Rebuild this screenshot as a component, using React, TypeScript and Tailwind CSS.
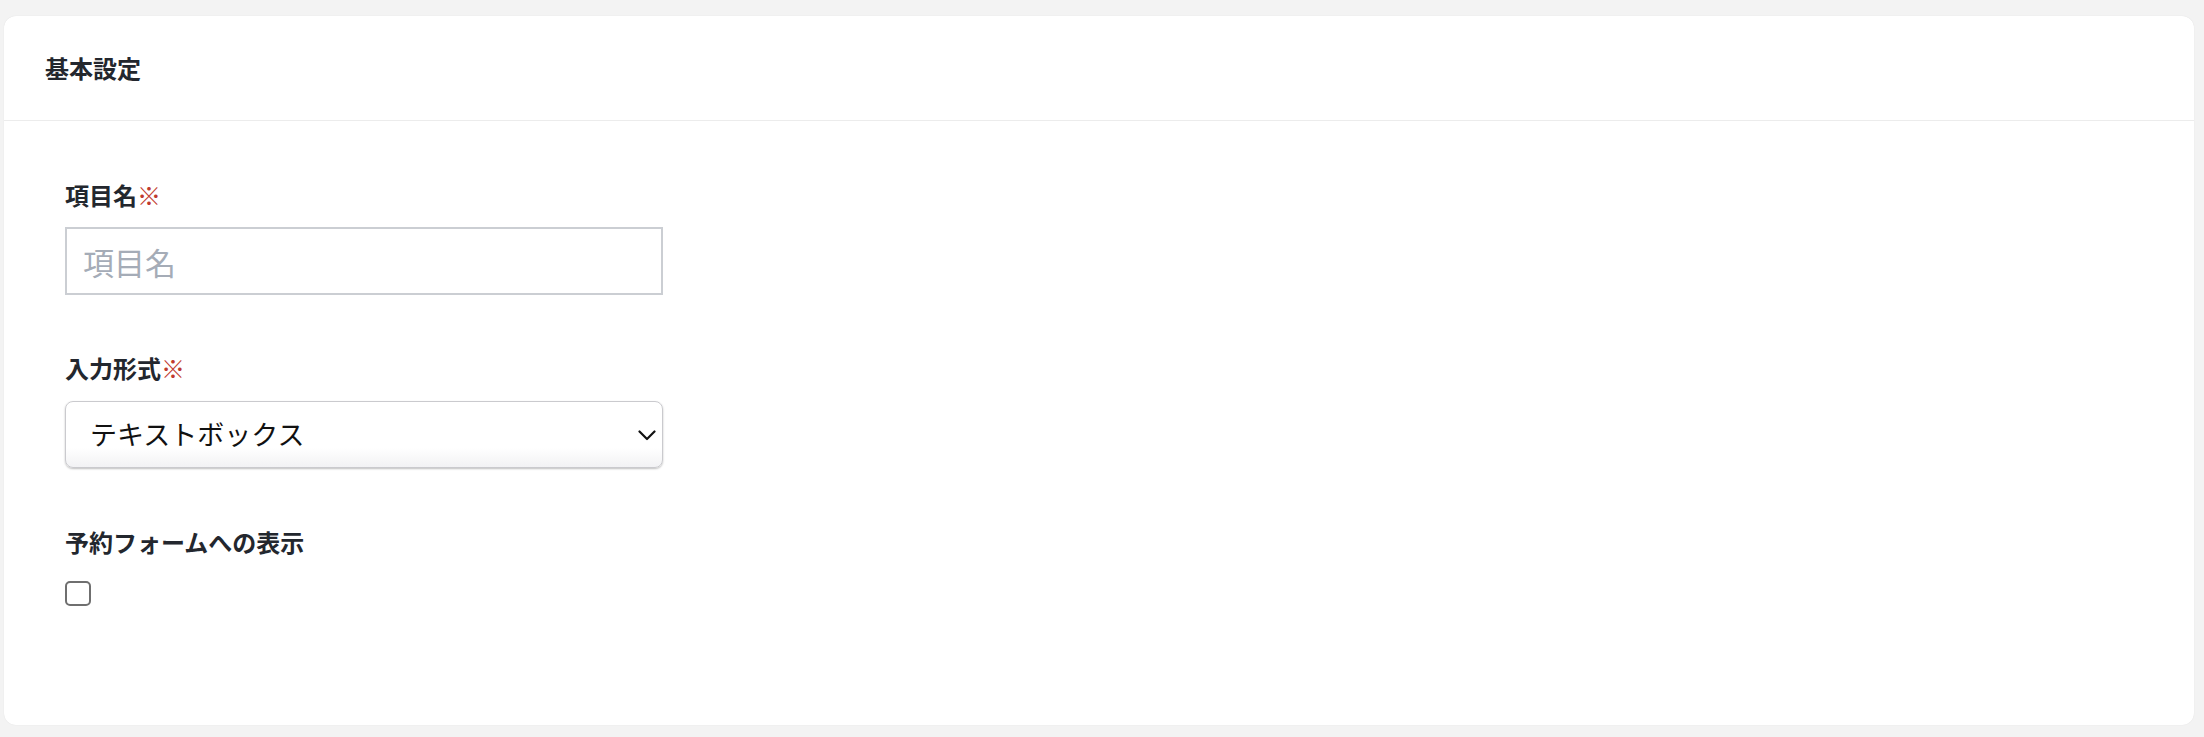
import { useState } from "react";

function Required() {
  return <span className="text-[#bf3a2e] font-normal">※</span>;
}

export default function App() {
  const [name, setName] = useState("");
  const [inputType, setInputType] = useState("text");
  const [showOnForm, setShowOnForm] = useState(false);

  return (
    <div className="min-h-screen bg-[#f3f3f3] pt-[16px] pb-[12px] pl-[4px] pr-[10px] font-['Noto_Sans_CJK_JP',sans-serif]">
      <div className="bg-white rounded-[12px] shadow-[0_0_1px_rgba(0,0,0,0.12)]">
        {/* Header */}
        <div className="px-[41px] py-[36px] border-b border-[#ececec]">
          <h2 className="text-[24px] leading-[32px] font-bold text-[#23272e]">
            基本設定
          </h2>
        </div>

        {/* Body */}
        <div className="pl-[61px] pr-[61px] pt-[58px] pb-[119px] flex flex-col">
          <div className="flex flex-col gap-[16px]">
            <label className="text-[24px] leading-[32px] font-bold text-[#23272e]">
              項目名
              <Required />
            </label>
            <input
              type="text"
              value={name}
              onChange={(e) => setName(e.target.value)}
              placeholder="項目名"
              className="w-[598px] h-[68px] border-2 border-[#cbced3] bg-white px-[16px] text-[31px] text-[#23272e] placeholder:text-[#a5acb7] outline-none"
            />
          </div>

          <div className="flex flex-col gap-[17px] mt-[57px]">
            <label className="text-[24px] leading-[32px] font-bold text-[#23272e]">
              入力形式
              <Required />
            </label>
            <div className="relative w-[598px]">
              <select
                value={inputType}
                onChange={(e) => setInputType(e.target.value)}
                className="appearance-none w-full h-[67px] rounded-[8px] border border-[#cacace] bg-gradient-to-b from-white from-70% to-[#f2f2f4] shadow-[0_1px_2px_rgba(0,0,0,0.25)] pl-[24px] pr-[50px] text-[27px] text-[#111] outline-none"
              >
                <option value="text">テキストボックス</option>
                <option value="textarea">テキストエリア</option>
                <option value="select">セレクトボックス</option>
              </select>
              <svg
                className="pointer-events-none absolute right-[7px] top-[29px]"
                width="18"
                height="11"
                viewBox="0 0 18 11"
                fill="none"
              >
                <path
                  d="M1.5 1.5 L9 9 L16.5 1.5"
                  stroke="#111"
                  strokeWidth="2.2"
                  strokeLinecap="round"
                  strokeLinejoin="round"
                />
              </svg>
            </div>
          </div>

          <div className="flex flex-col gap-[23px] mt-[58px]">
            <label className="text-[24px] leading-[32px] font-bold text-[#23272e]">
              予約フォームへの表示
            </label>
            <input
              type="checkbox"
              checked={showOnForm}
              onChange={(e) => setShowOnForm(e.target.checked)}
              className="appearance-none w-[26px] h-[25px] rounded-[5px] border-2 border-[#6f6f6f] bg-white checked:bg-blue-600"
            />
          </div>
        </div>
      </div>
    </div>
  );
}
